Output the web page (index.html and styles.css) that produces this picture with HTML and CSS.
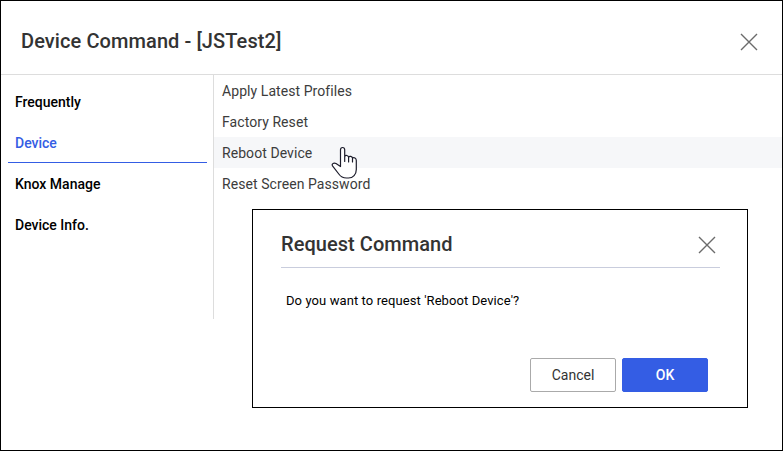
FILE: index.html
```html
<!DOCTYPE html>
<html lang="en">
<head>
<meta charset="utf-8">
<title>Device Command</title>
<link rel="stylesheet" href="styles.css">
</head>
<body>
<main class="window">
  <header class="window-header">
    <h1 class="title">Device Command - [JSTest2]</h1>
    <button class="close" aria-label="Close"><svg width="18" height="18" viewBox="0 0 18 18"><path d="M1 1 17 17M17 1 1 17"/></svg></button>
  </header>
  <div class="content">
    <nav class="tabs">
      <a class="tab">Frequently</a>
      <a class="tab active">Device</a>
      <a class="tab">Knox Manage</a>
      <a class="tab">Device Info.</a>
    </nav>
    <ul class="commands">
      <li>Apply Latest Profiles</li>
      <li>Factory Reset</li>
      <li class="hovered">Reboot Device</li>
      <li>Reset Screen Password</li>
    </ul>
  </div>
  <svg class="cursor" width="27" height="34" viewBox="0 0 27 34"><path d="M9.500 20.500V3.800C9.500.7 13.700.7 13.700 3.800V10.500C14.500 8.800 17.300 9.300 17.600 11.200 18.500 9.800 21.200 10.200 21.500 12 23 11 25.300 12 25.300 14.500V23.500C25.300 28.500 22 32 17.500 32H15.500C12 32 9.500 30.500 7.800 28L1.700 20.200C.2 18.200 2.500 16.300 5 17.500L9.500 20.500M13.700 10.500V15.500M17.600 11.200V16M21.500 12V16"/></svg>
  <section class="dialog">
    <header class="dialog-header">
      <h2 class="title dialog-title">Request Command</h2>
      <button class="close" aria-label="Close"><svg width="18" height="18" viewBox="0 0 18 18"><path d="M1 1 17 17M17 1 1 17"/></svg></button>
    </header>
    <p class="message">Do you want to request 'Reboot Device'?</p>
    <footer class="actions">
      <button class="button">Cancel</button>
      <button class="button primary">OK</button>
    </footer>
  </section>
</main>
</body>
</html>
```
FILE: styles.css
```css
* { box-sizing: border-box; }
body { margin: 0; background: #fff; font-family: Roboto, sans-serif; color: #333; }
.window { position: relative; width: 783px; height: 451px; border: 1px solid #000; background: #fff; }
.window-header { height: 74px; padding: 8px 24px 0 20px; display: flex; align-items: center; justify-content: space-between; border-bottom: 1px solid #ddd; }
.title { margin: 0; padding-bottom: 2px; font-size: 20px; line-height: 24px; font-weight: 500; letter-spacing: .09px; white-space: nowrap; }
.close { display: block; width: 18px; height: 18px; padding: 0; border: 0; background: none; }
.close svg { display: block; fill: none; stroke: #6b6b6b; stroke-width: 1.4; }
.content { display: flex; }
.tabs { width: 213px; height: 244px; padding: 6px 7px 0; border-right: 1px solid #ddd; }
.tab { display: block; width: 199px; height: 41px; padding: 0 7px; font-size: 14px; line-height: 43px; font-weight: 500; color: #000; }
.tab.active { color: #345de4; border-bottom: 1px solid #345de4; }
.commands { flex: 1; margin: 0; padding: 0; list-style: none; }
.commands li { height: 31px; padding-left: 8px; font-size: 14px; line-height: 33px; letter-spacing: .07px; color: #3c3c3c; }
.commands .hovered { background: #f6f7f9; }
.cursor { position: absolute; left: 330px; top: 145px; fill: #fff; stroke: #1c1c2b; stroke-width: 1.2; stroke-linejoin: round; stroke-linecap: round; }
.dialog { position: absolute; left: 251px; top: 208px; width: 496px; height: 199px; padding: 0 27px 0 28px; border: 1px solid #000; background: #fff; }
.dialog-header { height: 58px; padding: 12px 4px 0 0; display: flex; align-items: center; justify-content: space-between; border-bottom: 1px solid #c9cddd; }
.dialog-title { letter-spacing: .05px; }
.message { margin: 24px 0 0 5px; font-size: 13px; line-height: 18px; color: #000; letter-spacing: .09px; }
.actions { display: flex; justify-content: flex-end; gap: 6px; padding: 48px 12px 0 0; }
.button { width: 86px; height: 34px; padding: 0; border: 1px solid #aaa; border-radius: 2px; background: #fff; font: 14px Roboto, sans-serif; color: #333; }
.button.primary { border-color: #345de4; background: #345de4; color: #fff; font-weight: 500; }
```
